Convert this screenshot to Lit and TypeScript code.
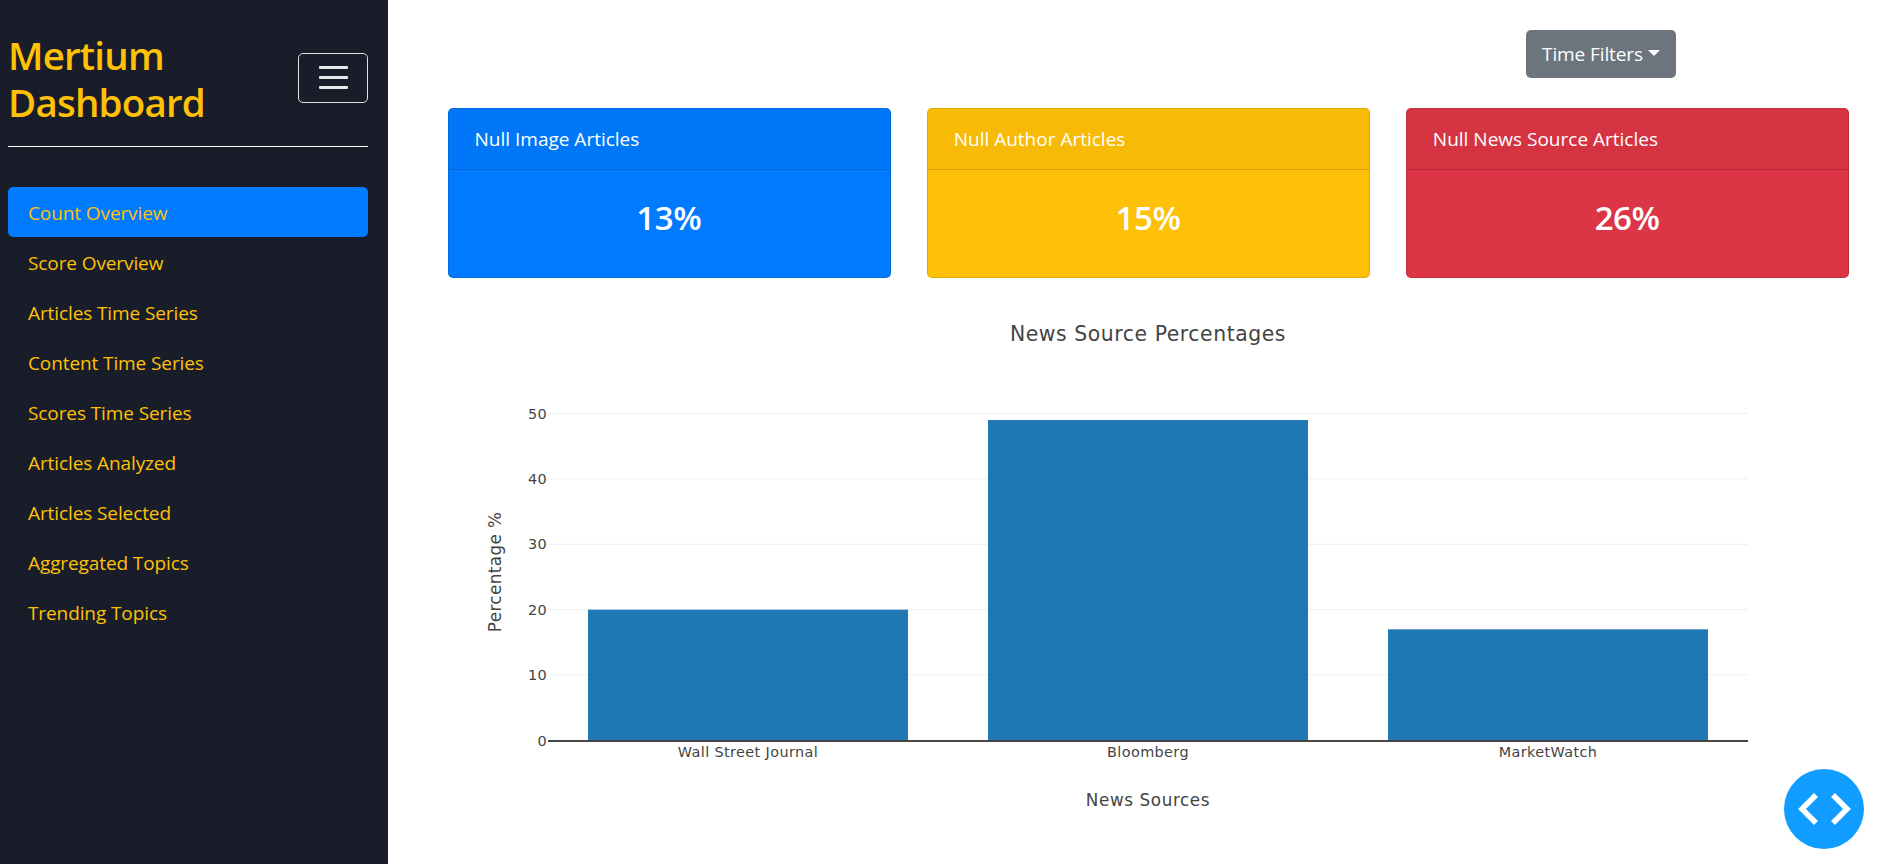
import {LitElement, html, css, svg} from 'lit';
import {customElement} from 'lit/decorators.js';

const NAV = [
  'Count Overview',
  'Score Overview',
  'Articles Time Series',
  'Content Time Series',
  'Scores Time Series',
  'Articles Analyzed',
  'Articles Selected',
  'Aggregated Topics',
  'Trending Topics',
];

const CARDS = [
  {title: 'Null Image Articles', value: '13%', cls: 'blue'},
  {title: 'Null Author Articles', value: '15%', cls: 'yellow'},
  {title: 'Null News Source Articles', value: '26%', cls: 'red'},
];

const BARS = [
  {label: 'Wall Street Journal', value: 20, x: 588},
  {label: 'Bloomberg', value: 49, x: 988},
  {label: 'MarketWatch', value: 17, x: 1388},
];

// plot coordinates, relative to the page's left edge
const Y0 = 740.5;
const PER_UNIT = 6.54;
const SVG_TOP = 300;

@customElement('app-root')
export class AppRoot extends LitElement {
  static styles = css`
    :host {
      display: flex;
      height: 864px;
      overflow: hidden;
      font-family: 'Open Sans', 'Liberation Sans', sans-serif;
      background: #fff;
    }
    .sidebar {
      width: 388px;
      flex: none;
      box-sizing: border-box;
      padding: 0 20px 0 8px;
      background: #181d29;
    }
    .brand {
      display: flex;
      align-items: center;
      justify-content: space-between;
      height: 147px;
      padding-top: 9px;
      box-sizing: border-box;
      border-bottom: 1px solid #fff;
    }
    .brand h1 {
      margin: 3px 0 0;
      font-size: 38.5px;
      line-height: 47px;
      font-weight: 600;
      letter-spacing: -0.8px;
      color: #ffc107;
    }
    .toggler {
      width: 70px;
      height: 50px;
      box-sizing: border-box;
      border: 1px solid #dfe1e4;
      border-radius: 5px;
      background: none;
      padding: 0;
      display: flex;
      flex-direction: column;
      align-items: center;
      justify-content: center;
      gap: 7.6px;
    }
    .toggler i {
      display: block;
      width: 29px;
      height: 2.4px;
      border-radius: 1px;
      background: #e6e8ea;
    }
    .nav {
      list-style: none;
      margin: 40px 0 0;
      padding: 0;
    }
    .nav li {
      height: 50px;
      line-height: 52px;
      padding-left: 20px;
      border-radius: 5px;
      font-size: 19px;
      letter-spacing: -0.1px;
      color: #ffc107;
    }
    .nav li.active {
      background: #007bff;
    }
    .main {
      flex: 1;
      min-width: 0;
      box-sizing: border-box;
      padding: 30px 44px 0 60px;
    }
    .toolbar {
      display: flex;
      justify-content: flex-end;
      padding-right: 173px;
    }
    .btn {
      display: flex;
      align-items: center;
      gap: 5px;
      height: 48px;
      width: 150px;
      justify-content: center;
      box-sizing: border-box;
      border: none;
      border-radius: 5px;
      background: #6c757d;
      color: #fff;
      font: inherit;
      font-size: 19px;
      letter-spacing: -0.1px;
    }
    .caret {
      width: 0;
      height: 0;
      border-left: 6px solid transparent;
      border-right: 6px solid transparent;
      border-top: 6px solid #fff;
      margin-top: -3px;
    }
    .cards {
      display: flex;
      gap: 36.5px;
      margin-top: 30px;
    }
    .card {
      flex: 1;
      height: 170px;
      box-sizing: border-box;
      border: 1px solid rgba(0, 0, 0, 0.125);
      border-radius: 5px;
      color: #fff;
      display: flex;
      flex-direction: column;
      overflow: hidden;
    }
    .card.blue { background: #007bff; }
    .card.yellow { background: #ffc107; }
    .card.red { background: #dc3545; }
    .card-header {
      height: 61px;
      flex: none;
      box-sizing: border-box;
      padding-left: 25.5px;
      line-height: 60px;
      font-size: 19px;
      background: rgba(0, 0, 0, 0.03);
      border-bottom: 1px solid rgba(0, 0, 0, 0.125);
    }
    .card-body {
      flex: 1;
      display: flex;
      align-items: center;
      justify-content: center;
      padding-bottom: 12px;
      padding-right: 1px;
      font-size: 33px;
      font-weight: 600;
      letter-spacing: -0.4px;
    }
    .chart {
      display: block;
      margin: 22px 0 0 -448px;
      font-family: 'DejaVu Sans', Verdana, sans-serif;
    }
    .chart text { fill: #444; }
    .grid { stroke: #eee; stroke-width: 1; }
    .axis { stroke: #444; stroke-width: 2; }
    .bar { fill: #1f77b4; }
    .fab {
      position: fixed;
      left: 1784px;
      top: 769px;
      width: 80px;
      height: 80px;
      border-radius: 50%;
      background: #119dff;
      display: flex;
      align-items: center;
      justify-content: center;
    }
  `;

  renderChart() {
    const ticks = [0, 10, 20, 30, 40, 50];
    return html`
      <svg class="chart" width="1893" height="564" viewBox="0 ${SVG_TOP} 1893 564">
        <text x="1148" y="341" font-size="20.4" text-anchor="middle" letter-spacing="0.55">News Source Percentages</text>
        ${ticks.map((t) => {
          const y = Y0 - t * PER_UNIT;
          return svg`
            ${t > 0 ? svg`<line class="grid" x1="548" x2="1748" y1=${y} y2=${y}></line>` : ''}
            <text x="547" y=${y + 5} font-size="14.4" letter-spacing="0.4" text-anchor="end">${t}</text>
          `;
        })}
        ${BARS.map((b) => {
          const h = b.value * PER_UNIT;
          return svg`
            <rect class="bar" x=${b.x} y=${Y0 - h} width="320" height=${h}></rect>
            <text x=${b.x + 160} y="757" font-size="14.4" letter-spacing="0.4" text-anchor="middle">${b.label}</text>
          `;
        })}
        <line class="axis" x1="548" x2="1748" y1="741" y2="741"></line>
        <text x="1148" y="806" font-size="16.8" letter-spacing="0.6" text-anchor="middle">News Sources</text>
        <text font-size="16.8" letter-spacing="0.4" text-anchor="middle" transform="translate(501 572) rotate(-90)">Percentage %</text>
      </svg>
    `;
  }

  render() {
    return html`
      <aside class="sidebar">
        <div class="brand">
          <h1>Mertium<br />Dashboard</h1>
          <button class="toggler"><i></i><i></i><i></i></button>
        </div>
        <ul class="nav">
          ${NAV.map((n, i) => html`<li class=${i === 0 ? 'active' : ''}>${n}</li>`)}
        </ul>
      </aside>
      <main class="main">
        <div class="toolbar">
          <button class="btn">Time Filters<span class="caret"></span></button>
        </div>
        <div class="cards">
          ${CARDS.map(
            (c) => html`
              <div class="card ${c.cls}">
                <div class="card-header">${c.title}</div>
                <div class="card-body">${c.value}</div>
              </div>
            `
          )}
        </div>
        ${this.renderChart()}
      </main>
      <div class="fab">
        <svg width="60" height="40" viewBox="0 0 60 40" fill="none" stroke="#fff" stroke-width="5.5">
          <path d="M22 6 L8 20 L22 34"></path>
          <path d="M39 6 L53 20 L39 34"></path>
        </svg>
      </div>
    `;
  }
}
